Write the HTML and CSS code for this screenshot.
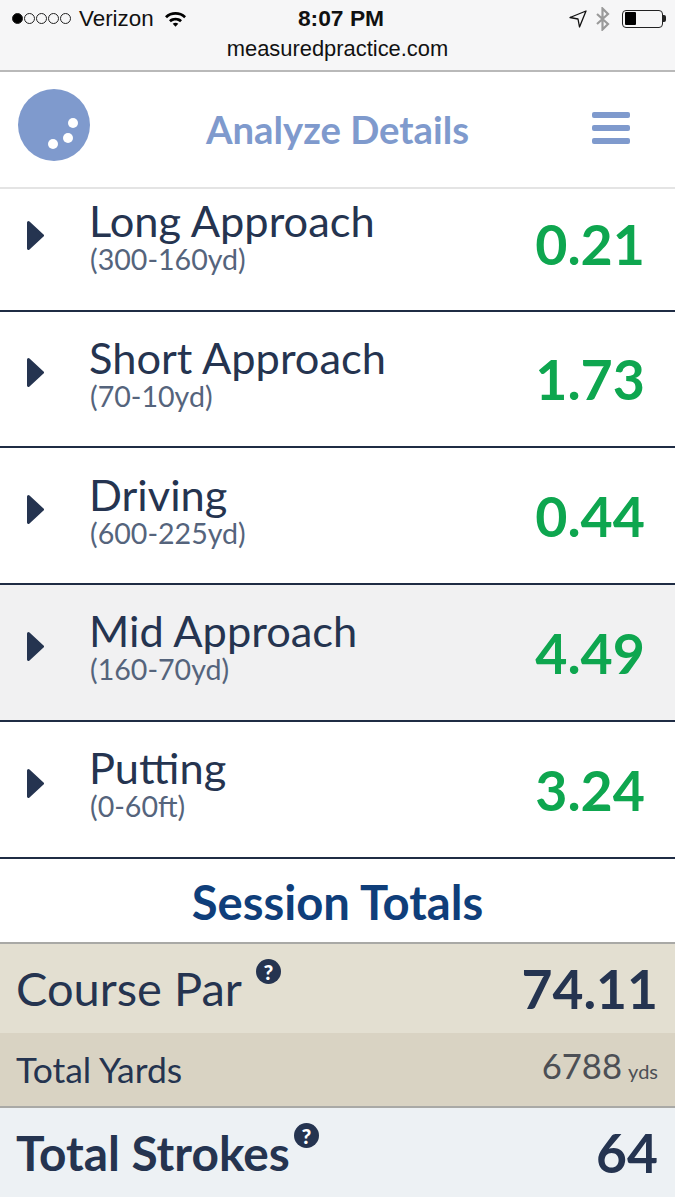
FILE: index.html
```html
<!DOCTYPE html>
<html lang="en">
<head>
<meta charset="utf-8">
<title>Analyze Details</title>
<link rel="stylesheet" href="styles.css">
</head>
<body>
<div class="status">
  <div class="status-top">
    <div class="status-left">
      <span class="signal"><i class="dot on"></i><i class="dot"></i><i class="dot"></i><i class="dot"></i><i class="dot"></i></span>
      <span class="carrier">Verizon</span>
      <svg class="wifi" width="23" height="17" viewBox="0 0 23 17"><path d="M1 6.200C7 .6 16 .6 22 6.200l-1.800 2C16 3.700 7 3.700 3 8.200z"/><path d="M5 10.200c3.700-3.200 9.300-3.200 13 0l-1.900 2c-2.700-2.200-6.500-2.200-9.200 0z"/><path d="M8.700 13.800c1.700-1.300 3.900-1.300 5.600 0l-2.800 2.900z"/></svg>
    </div>
    <div class="clock">8:07 PM</div>
    <div class="status-right">
      <svg class="loc" width="18" height="18" viewBox="0 0 18 18"><path d="M1 7.500 17 1 10.500 17 9 9z" fill="none" stroke="#111" stroke-width="1.300" stroke-linejoin="round"/></svg>
      <svg class="bt" width="15" height="24" viewBox="0 0 15 24"><path d="M2 7l11 10-5.500 5.500v-21L13 7 2 17" fill="none" stroke="#9a9a9a" stroke-width="2.200"/></svg>
      <span class="battery"><span class="charge"></span></span><span class="nub"></span>
    </div>
  </div>
  <div class="url">measuredpractice.com</div>
</div>
<header class="nav">
  <svg class="logo" width="72" height="72" viewBox="0 0 72 72"><circle cx="36" cy="36" r="36" fill="#7f9acd"/><circle cx="55" cy="34" r="5" fill="#fff"/><circle cx="50" cy="49" r="5" fill="#fff"/><circle cx="35" cy="55" r="5" fill="#fff"/></svg>
  <h1 class="title">Analyze Details</h1>
  <div class="burger"><span></span><span></span><span></span></div>
</header>
<main>
  <section class="row first">
    <svg class="arrow" viewBox="0 0 17 29"><path d="M1.500 1.500 15.500 14.500 1.500 27.500z" fill="#253450" stroke="#253450" stroke-width="3" stroke-linejoin="round"/></svg>
    <div class="label"><div class="name">Long Approach</div><div class="range">(300-160yd)</div></div>
    <div class="val">0.21</div>
  </section>
  <section class="row">
    <svg class="arrow" viewBox="0 0 17 29"><path d="M1.500 1.500 15.500 14.500 1.500 27.500z" fill="#253450" stroke="#253450" stroke-width="3" stroke-linejoin="round"/></svg>
    <div class="label"><div class="name">Short Approach</div><div class="range">(70-10yd)</div></div>
    <div class="val">1.73</div>
  </section>
  <section class="row">
    <svg class="arrow" viewBox="0 0 17 29"><path d="M1.500 1.500 15.500 14.500 1.500 27.500z" fill="#253450" stroke="#253450" stroke-width="3" stroke-linejoin="round"/></svg>
    <div class="label"><div class="name">Driving</div><div class="range">(600-225yd)</div></div>
    <div class="val">0.44</div>
  </section>
  <section class="row shaded">
    <svg class="arrow" viewBox="0 0 17 29"><path d="M1.500 1.500 15.500 14.500 1.500 27.500z" fill="#253450" stroke="#253450" stroke-width="3" stroke-linejoin="round"/></svg>
    <div class="label"><div class="name">Mid Approach</div><div class="range">(160-70yd)</div></div>
    <div class="val">4.49</div>
  </section>
  <section class="row">
    <svg class="arrow" viewBox="0 0 17 29"><path d="M1.500 1.500 15.500 14.500 1.500 27.500z" fill="#253450" stroke="#253450" stroke-width="3" stroke-linejoin="round"/></svg>
    <div class="label"><div class="name">Putting</div><div class="range">(0-60ft)</div></div>
    <div class="val">3.24</div>
  </section>
</main>
<h2 class="totals">Session Totals</h2>
<div class="par">
  <div class="par-label">Course Par<span class="help">?</span></div>
  <div class="par-val">74.11</div>
</div>
<div class="yards">
  <div class="yards-label">Total Yards</div>
  <div class="yards-val">6788<span class="unit">yds</span></div>
</div>
<div class="strokes">
  <div class="strokes-label">Total Strokes<span class="help help-strokes">?</span></div>
  <div class="strokes-val">64</div>
</div>
</body>
</html>
```
FILE: styles.css
```css
* { box-sizing: border-box; }
html, body { margin: 0; padding: 0; }
body { width: 675px; height: 1200px; overflow: hidden; background: #fff; font-family: Lato, sans-serif; color: #253450; }

.status { height: 72px; background: #f6f6f7; border-bottom: 2px solid #b9b9b9; font-family: "Liberation Sans", Arial, sans-serif; color: #111; }
.status-top { height: 37px; display: grid; grid-template-columns: 1fr auto 1fr; align-items: center; padding: 0 9px 0 12px; }
.status-left { display: flex; align-items: center; gap: 8px; }
.signal { display: flex; gap: 1px; }
.dot { width: 11px; height: 11px; border-radius: 50%; border: 1px solid #222; display: block; }
.dot.on { background: #000; }
.carrier { font-size: 22.400px; }
.wifi { margin-left: 2px; fill: #000; }
.clock { font-size: 22.800px; font-weight: 700; margin-left: 4px; }
.status-right { display: flex; align-items: center; justify-content: flex-end; gap: 8px; }
.battery { width: 41px; height: 18px; border: 1.500px solid #222; border-radius: 4px; padding: 1.500px; display: flex; margin-left: 4px; }
.charge { width: 11px; background: #000; border-radius: 1px; }
.nub { width: 3px; height: 7px; background: #222; border-radius: 0 2px 2px 0; margin-left: -8px; }
.url { text-align: center; font-size: 21.900px; line-height: 24px; }

.nav { height: 117px; display: grid; grid-template-columns: 1fr auto 1fr; align-items: center; padding: 0 18px 2px; border-bottom: 2px solid #e4e4e4; }
.logo { display: block; margin-bottom: 8px; }
.title { margin: 0; font-size: 38.300px; font-weight: 700; color: #7f9acd; }
.burger { width: 38.500px; justify-self: end; display: flex; flex-direction: column; gap: 7px; margin: 0 27px 1px 0; }
.burger span { display: block; height: 6px; border-radius: 2px; background: #7f9acd; }

.row { height: 136.750px; display: flex; align-items: center; border-bottom: 2px solid #1f2c44; padding: 0 30px 0 27px; }
.row.first { height: 122.500px; }
.row.shaded { background: #f1f1f2; }
.arrow { width: 17px; height: 29px; margin: 0 45px 12px 0; flex: none; }
.first .arrow { margin-bottom: 28px; }
.label { flex: 1; margin-bottom: 13px; }
.first .label { margin-bottom: 27px; }
.name { font-size: 43.400px; line-height: 46px; margin-bottom: 1px; }
.range { font-size: 28.600px; line-height: 30px; color: #55647c; margin-left: 1px; }
.val { font-size: 55.500px; font-weight: 700; color: #0ea64f; }
.first .val { margin-bottom: 12px; }

.totals { margin: 0; height: 83px; line-height: 85px; text-align: center; font-size: 47.200px; font-weight: 700; color: #0f3e7a; }

.par { height: 91px; display: flex; justify-content: space-between; align-items: center; padding: 0 17px 0 16px; background: #e3dfd1; border-top: 2px solid #a9a9a6; }
.par-label { font-size: 47px; }
.par-val { font-size: 53.400px; font-weight: 700; }
.yards { height: 75px; display: flex; justify-content: space-between; align-items: center; padding: 0 17px 0 16px; background: #d9d3c3; border-bottom: 2px solid #a9a9a6; }
.yards-label { font-size: 35.500px; }
.yards-val { font-size: 34.700px; color: #4c4f55; margin-bottom: 8px; }
.unit { font-size: 20px; margin-left: 6px; }
.strokes { height: 89px; display: flex; justify-content: space-between; align-items: center; padding: 0 17px 0 16px; background: #edf1f4; }
.strokes-label { font-size: 47.800px; font-weight: 700; }
.strokes-val { font-size: 53.400px; font-weight: 700; }
.help { display: inline-block; width: 25px; height: 25px; border-radius: 50%; background: #253450; color: #fff; font-size: 21px; font-weight: 900; line-height: 25px; text-align: center; vertical-align: top; margin: -1px 0 0 14px; }
.help-strokes { margin-left: 4px; }
```
